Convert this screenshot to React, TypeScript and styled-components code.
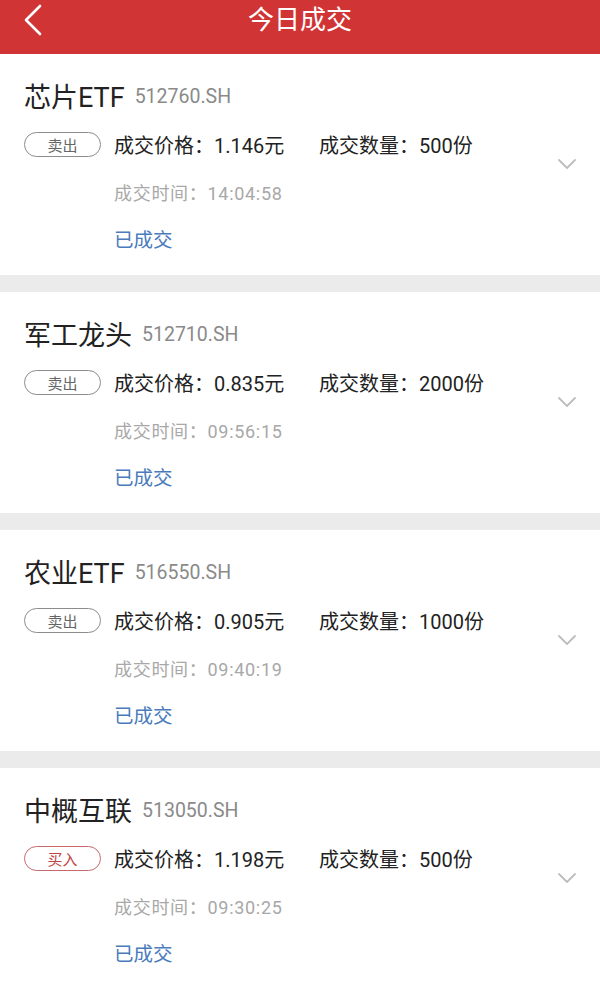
import React from "react";
import styled, { createGlobalStyle } from "styled-components";

interface Trade {
  name: string;
  code: string;
  side: "buy" | "sell";
  price: string;
  qty: string;
  time: string;
}

const trades: Trade[] = [
  { name: "芯片ETF", code: "512760.SH", side: "sell", price: "1.146", qty: "500", time: "14:04:58" },
  { name: "军工龙头", code: "512710.SH", side: "sell", price: "0.835", qty: "2000", time: "09:56:15" },
  { name: "农业ETF", code: "516550.SH", side: "sell", price: "0.905", qty: "1000", time: "09:40:19" },
  { name: "中概互联", code: "513050.SH", side: "buy", price: "1.198", qty: "500", time: "09:30:25" },
];

const GlobalStyle = createGlobalStyle`
  html, body {
    margin: 0;
    padding: 0;
    background: #ebebeb;
    font-family: Roboto, "Noto Sans CJK SC", sans-serif;
  }
`;

const Page = styled.div`
  width: 600px;
  min-height: 983px;
  background: #ebebeb;
`;

const Header = styled.header`
  height: 54px;
  background: #d13434;
  display: flex;
  align-items: center;
  justify-content: center;
  position: relative;
`;

const BackButton = styled.div`
  position: absolute;
  left: 21px;
  top: 1px;
  width: 24px;
  height: 36px;
`;

const Title = styled.h1`
  margin: 0 0 14px;
  font-size: 26px;
  font-weight: 400;
  color: #fff;
  line-height: 40px;
`;

const List = styled.div`
  display: flex;
  flex-direction: column;
  gap: 17px;
`;

const Card = styled.div`
  background: #fff;
  display: flex;
  align-items: center;
  padding: 24px 23px 21px 24px;
`;

const Main = styled.div`
  flex: 1;
  display: flex;
  flex-direction: column;
`;

const NameRow = styled.div`
  height: 38px;
  display: flex;
  align-items: center;
  gap: 10px;
`;

const Name = styled.span`
  font-size: 27px;
  color: #222;
  margin-top: -4px;
`;

const Code = styled.span`
  font-size: 19.5px;
  color: #8a8a8a;
  margin-top: -2px;
`;

const Row = styled.div<{ $indent?: boolean }>`
  height: 30px;
  margin-top: ${({ $indent }) => ($indent ? "17px" : "14px")};
  padding-left: ${({ $indent }) => ($indent ? "90px" : "0")};
  display: flex;
  align-items: center;
`;

const SideTag = styled.span<{ $buy: boolean }>`
  box-sizing: border-box;
  width: 77px;
  height: 25px;
  margin-right: 13px;
  margin-top: -2px;
  border-radius: 13px;
  border: 1px solid ${({ $buy }) => ($buy ? "#c46a6a" : "#8c8c8c")};
  color: ${({ $buy }) => ($buy ? "#c24444" : "#666")};
  font-size: 15px;
  display: flex;
  align-items: center;
  justify-content: center;
`;

const Field = styled.span<{ $width?: number }>`
  font-size: 20px;
  color: #222;
  margin-top: -2px;
  width: ${({ $width }) => ($width ? `${$width}px` : "auto")};
`;

const Time = styled.span`
  font-size: 18px;
  color: #a8a8a8;
  letter-spacing: 0.7px;
`;

const Status = styled.span`
  font-size: 19.5px;
  color: #4a7bbd;
  margin-top: -2px;
`;

const Expand = styled.div`
  width: 20px;
  height: 12px;
  margin-top: -10px;
`;

const App: React.FC = () => {
  return (
    <Page>
      <GlobalStyle />
      <Header>
        <BackButton>
          <svg width="24" height="36" viewBox="0 0 24 36">
            <polyline points="19,5 5,19 19,33" fill="none" stroke="#fff" strokeWidth="2.6" strokeLinecap="round" strokeLinejoin="round" />
          </svg>
        </BackButton>
        <Title>今日成交</Title>
      </Header>
      <List>
        {trades.map((t) => (
          <Card key={t.code}>
            <Main>
              <NameRow>
                <Name>{t.name}</Name>
                <Code>{t.code}</Code>
              </NameRow>
              <Row>
                <SideTag $buy={t.side === "buy"}>{t.side === "buy" ? "买入" : "卖出"}</SideTag>
                <Field $width={205}>成交价格：{t.price}元</Field>
                <Field>成交数量：{t.qty}份</Field>
              </Row>
              <Row $indent>
                <Time>成交时间：{t.time}</Time>
              </Row>
              <Row $indent>
                <Status>已成交</Status>
              </Row>
            </Main>
            <Expand>
              <svg width="20" height="12" viewBox="0 0 20 12">
                <polyline points="2,2 10,10 18,2" fill="none" stroke="#bdbdbd" strokeWidth="1.8" strokeLinecap="round" strokeLinejoin="round" />
              </svg>
            </Expand>
          </Card>
        ))}
      </List>
    </Page>
  );
};

export default App;
